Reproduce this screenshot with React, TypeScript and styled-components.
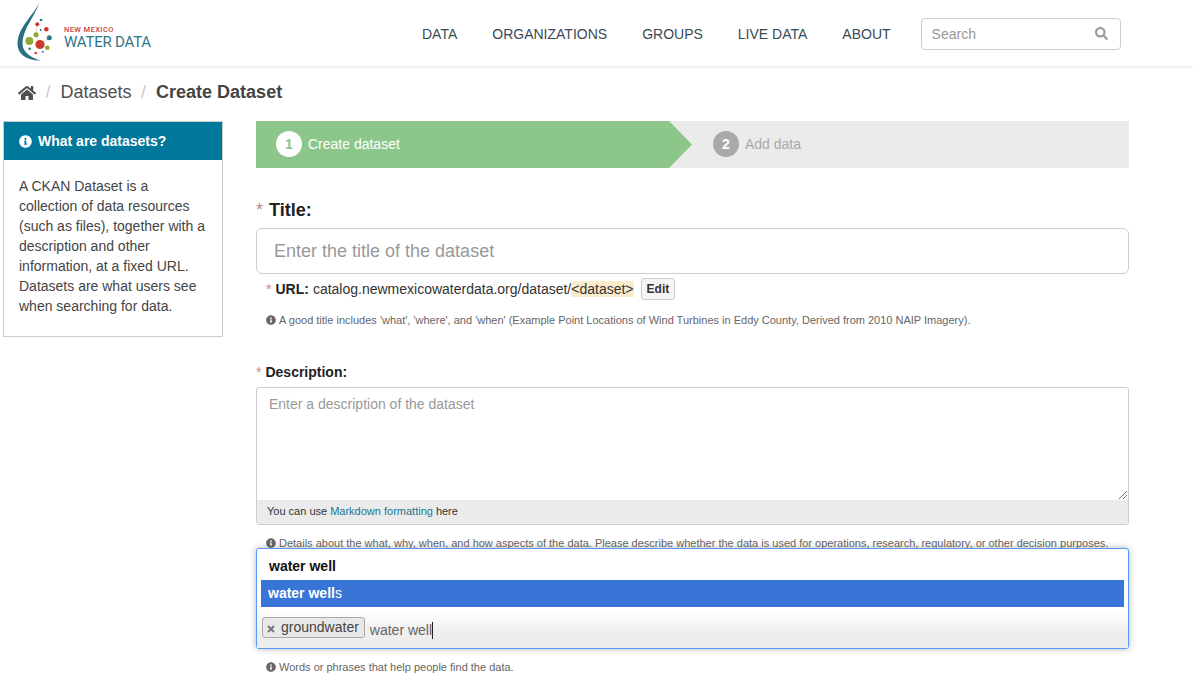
import React from "react";
import styled, { createGlobalStyle } from "styled-components";
import { FaHome, FaInfoCircle, FaSearch } from "react-icons/fa";

const Global = createGlobalStyle`
  html, body { margin: 0; padding: 0; background: #fff; overflow: hidden; height: 689px; }
  body { font-family: "Liberation Sans", Arial, sans-serif; font-size: 14px; color: #444; }
  * { box-sizing: border-box; }
`;

const Page = styled.div`
  width: 1193px;
  height: 689px;
  overflow: hidden;
`;
const Header = styled.header`
  height: 66px;
  display: flex;
  align-items: center;
  padding: 0 72px 0 17px;
  box-shadow: 0 1px 3px rgba(0, 0, 0, 0.12);
`;
const LogoLink = styled.a`
  display: flex;
  align-items: center;
  width: 405px;
  flex: none;
`;
const LogoMark = styled.svg`
  width: 46px;
  height: 66px;
  flex: none;
`;
const LogoWords = styled.div`
  display: flex;
  flex-direction: column;
  margin-left: 1px;
  margin-top: 9px;
`;
const LogoTop = styled.span`
  font-family: "Roboto", sans-serif;
  font-size: 7.5px;
  line-height: 9px;
  letter-spacing: 0.4px;
  font-weight: 500;
  color: #c8433c;
`;
const LogoBottom = styled.span`
  font-family: "Roboto", sans-serif;
  font-size: 15px;
  line-height: 16px;
  letter-spacing: -0.2px;
  color: #2f7688;
`;
const Nav = styled.nav`
  display: flex;
  gap: 35px;
  margin-top: 1px;
  flex: none;
`;
const NavItem = styled.a`
  font-size: 14px;
  line-height: 20px;
  color: #3a4a55;
  white-space: nowrap;
`;
const SearchBox = styled.div`
  width: 200px;
  height: 32px;
  margin-left: 30px;
  margin-top: 1px;
  flex: none;
  border: 1px solid #ccc;
  border-radius: 4px;
  display: flex;
  align-items: center;
  justify-content: space-between;
  padding: 0 12px 0 10px;
  font-size: 14px;
  color: #999;
`;
const Crumbs = styled.div`
  height: 53px;
  margin-bottom: 2px;
  display: flex;
  align-items: center;
  padding: 0 0 0 18px;
  font-size: 18px;
  color: #505050;
`;
const CrumbSep = styled.span`
  margin: 0 10px 0 9.5px;
  color: #ccc;
`;
const CrumbStrong = styled.strong`
  color: #444;
`;
const Columns = styled.div`
  display: flex;
  align-items: flex-start;
  padding-left: 3px;
`;
const Side = styled.aside`
  width: 220px;
  flex: none;
  border: 1px solid #ccc;
`;
const SideHead = styled.h2`
  margin: 0;
  height: 38px;
  background: #00789c;
  color: #fff;
  font-size: 14px;
  font-weight: 700;
  display: flex;
  align-items: center;
  gap: 6px;
  padding-left: 15px;
`;
const SideBody = styled.p`
  margin: 0;
  padding: 16px 15px 20px;
  font-size: 14px;
  line-height: 20px;
  color: #444;
`;
const Main = styled.main`
  width: 873px;
  margin-left: 33px;
`;
const Stepper = styled.div`
  height: 47px;
  background: #ebebeb;
  display: flex;
`;
const StepActive = styled.div`
  width: 436px;
  background: #8cc68a;
  display: flex;
  align-items: center;
  padding: 0 0 1px 20px;
  color: #fff;
  clip-path: polygon(0 0, 413px 0, 100% 50%, 413px 100%, 0 100%);
`;
const StepIdle = styled.div`
  display: flex;
  align-items: center;
  padding: 0 0 1px 21px;
  color: #a9a9a9;
`;
const StepNum = styled.span<{ $on?: boolean }>`
  width: 26px;
  height: 26px;
  border-radius: 50%;
  margin-right: 6px;
  display: flex;
  align-items: center;
  justify-content: center;
  font-weight: 700;
  font-size: 14px;
  background: ${(p) => (p.$on ? "#fff" : "#a9a9a9")};
  color: ${(p) => (p.$on ? "#8cc68a" : "#fff")};
`;
const TitleLabel = styled.label`
  display: block;
  margin-top: 32px;
  height: 28px;
  line-height: 20px;
  font-size: 18px;
  font-weight: 700;
  color: #222;
`;
const Star = styled.span<{ $big?: boolean }>`
  color: #c6898b;
  font-weight: 400;
  font-size: ${(p) => (p.$big ? 18 : 14)}px;
  margin-right: ${(p) => (p.$big ? 6 : 4)}px;
`;
const TitleInput = styled.div`
  height: 46px;
  border: 1px solid #ccc;
  border-radius: 6px;
  display: flex;
  align-items: center;
  padding-left: 17px;
  font-size: 18px;
  color: #999;
`;
const UrlRow = styled.div`
  height: 30px;
  padding-left: 10px;
  display: flex;
  align-items: center;
  color: #333;
  font-size: 14px;
`;
const UrlLabel = styled.strong`
  margin-right: 4px;
  color: #222;
`;
const Slug = styled.span`
  background: #faebcc;
`;
const EditBtn = styled.span`
  margin-left: 7px;
  height: 22px;
  padding: 0 5px;
  border: 1px solid #ccc;
  border-radius: 3px;
  background: #f5f5f5;
  display: flex;
  align-items: center;
  font-size: 12px;
  font-weight: 700;
  color: #333;
`;
const Help = styled.p<{ $top: number }>`
  margin: ${(p) => p.$top}px 0 0 10px;
  height: 14px;
  display: flex;
  align-items: center;
  gap: 3px;
  font-size: 11px;
  line-height: 14px;
  color: #666;
  white-space: nowrap;
`;
const DescLabel = styled.label`
  display: block;
  margin-top: 37px;
  height: 23px;
  line-height: 16px;
  font-size: 14px;
  font-weight: 700;
  color: #222;
`;
const DescBox = styled.div`
  height: 138px;
  border: 1px solid #ccc;
  border-radius: 3px;
  display: flex;
  flex-direction: column;
`;
const DescArea = styled.div`
  flex: 1;
  position: relative;
  padding: 8px 12px;
  color: #999;
  line-height: 16px;
`;
const Grip = styled.svg`
  position: absolute;
  right: 0;
  bottom: 0;
  width: 10px;
  height: 10px;
`;
const DescFoot = styled.div`
  height: 24px;
  background: #ebebeb;
  display: flex;
  align-items: center;
  padding: 0 0 2px 10px;
  font-size: 11px;
  color: #333;
`;
const MdLink = styled.a`
  color: #187794;
  margin: 0 3px;
`;
const TagField = styled.div`
  position: relative;
  margin-top: -2px;
  height: 101px;
  border: 1px solid #5897fb;
  border-radius: 3px;
  background: #fff;
  box-shadow: 0 0 6px rgba(0, 0, 0, 0.3);
  display: flex;
  flex-direction: column;
`;
const TagSearch = styled.div`
  height: 31px;
  padding: 3px 0 0 12px;
  display: flex;
  align-items: center;
  font-size: 14px;
  font-weight: 700;
  color: #111;
`;
const TagResult = styled.div`
  height: 27px;
  margin: 0 4px;
  padding: 0 0 2px 7px;
  background: #3875d7;
  display: flex;
  align-items: center;
  font-size: 14px;
  color: #fff;
`;
const TagChoices = styled.div`
  flex: 1;
  margin-top: 4px;
  background: linear-gradient(to bottom, #fff 0%, #eee 60%, #eee 100%);
  display: flex;
  align-items: flex-start;
  padding: 6px 0 0 5px;
`;
const Chip = styled.span`
  height: 21px;
  border: 1px solid #aaa;
  border-radius: 3px;
  background: #e8e8e8;
  display: flex;
  align-items: center;
  padding: 0 5px 2px 4px;
  font-size: 14px;
  color: #444;
`;
const ChipX = styled.svg`
  width: 8px;
  height: 8px;
  margin: 4px 6px 0 0;
  flex: none;
`;
const TagInput = styled.span`
  margin-left: 5px;
  margin-top: 5px;
  font-size: 14px;
  line-height: 17px;
  color: #666;
  border-right: 1px solid #222;
`;

const items = ["DATA", "ORGANIZATIONS", "GROUPS", "LIVE DATA", "ABOUT"];

const dots: [number, number, number, string][] = [
  [23, 44.5, 4.6, "#c8392e"],
  [12.3, 41, 4, "#8fa82f"],
  [19, 34.7, 2.5, "#8fa82f"],
  [29.3, 29.3, 2.3, "#c8392e"],
  [20.3, 24.3, 2, "#c8392e"],
  [24, 20, 1.3, "#2f7688"],
  [32.3, 37.7, 2.5, "#2f7688"],
  [30.3, 47.7, 2.3, "#8fa82f"],
  [12.7, 48.7, 1.3, "#2f7688"],
  [18.7, 53, 1.3, "#c8392e"],
  [25.7, 51.7, 1, "#2f7688"],
  [23.7, 30, 1, "#2f7688"],
];

export default function App() {
  return (
    <Page>
      <Global />
      <Header>
        <LogoLink>
          <LogoMark viewBox="0 0 46 66">
            <path d="M22.5 1 C19 14 0.5 26 0.5 44 C0.5 54 10 61 24 60.5 C14 58 5.5 52 5.5 44 C5.5 28 19 16 22.5 1 Z" fill="#2a6f80" />
            <g stroke="#c9b9a9" strokeWidth="0.6">
              <line x1="23" y1="44" x2="32" y2="38" />
              <line x1="23" y1="44" x2="19" y2="35" />
              <line x1="23" y1="44" x2="30" y2="48" />
              <line x1="19" y1="35" x2="20" y2="24" />
            </g>
            {dots.map(([cx, cy, r, fill]) => (
              <circle key={`${cx}-${cy}`} cx={cx} cy={cy} r={r} fill={fill} />
            ))}
          </LogoMark>
          <LogoWords>
            <LogoTop>NEW MEXICO</LogoTop>
            <LogoBottom>WATER DATA</LogoBottom>
          </LogoWords>
        </LogoLink>
        <Nav>
          {items.map((t) => (
            <NavItem key={t}>{t}</NavItem>
          ))}
        </Nav>
        <SearchBox>
          Search
          <FaSearch size={13} color="#999" />
        </SearchBox>
      </Header>
      <Crumbs>
        <FaHome size={18} color="#505050" />
        <CrumbSep>/</CrumbSep>
        Datasets
        <CrumbSep>/</CrumbSep>
        <CrumbStrong>Create Dataset</CrumbStrong>
      </Crumbs>
      <Columns>
        <Side>
          <SideHead>
            <FaInfoCircle size={13} />
            What are datasets?
          </SideHead>
          <SideBody>
            A CKAN Dataset is a collection of data resources (such as files), together with a description and other
            information, at a fixed URL. Datasets are what users see when searching for data.
          </SideBody>
        </Side>
        <Main>
          <Stepper>
            <StepActive>
              <StepNum $on>1</StepNum>Create dataset
            </StepActive>
            <StepIdle>
              <StepNum>2</StepNum>Add data
            </StepIdle>
          </Stepper>
          <TitleLabel>
            <Star $big>*</Star>Title:
          </TitleLabel>
          <TitleInput>Enter the title of the dataset</TitleInput>
          <UrlRow>
            <Star>*</Star>
            <UrlLabel>URL:</UrlLabel>
            catalog.newmexicowaterdata.org/dataset/<Slug>&lt;dataset&gt;</Slug>
            <EditBtn>Edit</EditBtn>
          </UrlRow>
          <Help $top={9}>
            <FaInfoCircle size={10} />A good title includes 'what', 'where', and 'when' (Example Point Locations of Wind
            Turbines in Eddy County, Derived from 2010 NAIP Imagery).
          </Help>
          <DescLabel>
            <Star>*</Star>Description:
          </DescLabel>
          <DescBox>
            <DescArea>
              Enter a description of the dataset
              <Grip viewBox="0 0 10 10">
                <path d="M1 9 L9 1 M5 9 L9 5" stroke="#777" strokeWidth="1" />
              </Grip>
            </DescArea>
            <DescFoot>
              You can use<MdLink>Markdown formatting</MdLink>here
            </DescFoot>
          </DescBox>
          <Help $top={11}>
            <FaInfoCircle size={10} />
            Details about the what, why, when, and how aspects of the data. Please describe whether the data is used for
            operations, research, regulatory, or other decision purposes.
          </Help>
          <TagField>
            <TagSearch>water well</TagSearch>
            <TagResult>
              <strong>water well</strong>s
            </TagResult>
            <TagChoices>
              <Chip>
                <ChipX viewBox="0 0 8 8">
                  <path d="M1 1 L7 7 M7 1 L1 7" stroke="#777" strokeWidth="2" />
                </ChipX>
                groundwater
              </Chip>
              <TagInput>water well</TagInput>
            </TagChoices>
          </TagField>
          <Help $top={11}>
            <FaInfoCircle size={10} />
            Words or phrases that help people find the data.
          </Help>
        </Main>
      </Columns>
    </Page>
  );
}
